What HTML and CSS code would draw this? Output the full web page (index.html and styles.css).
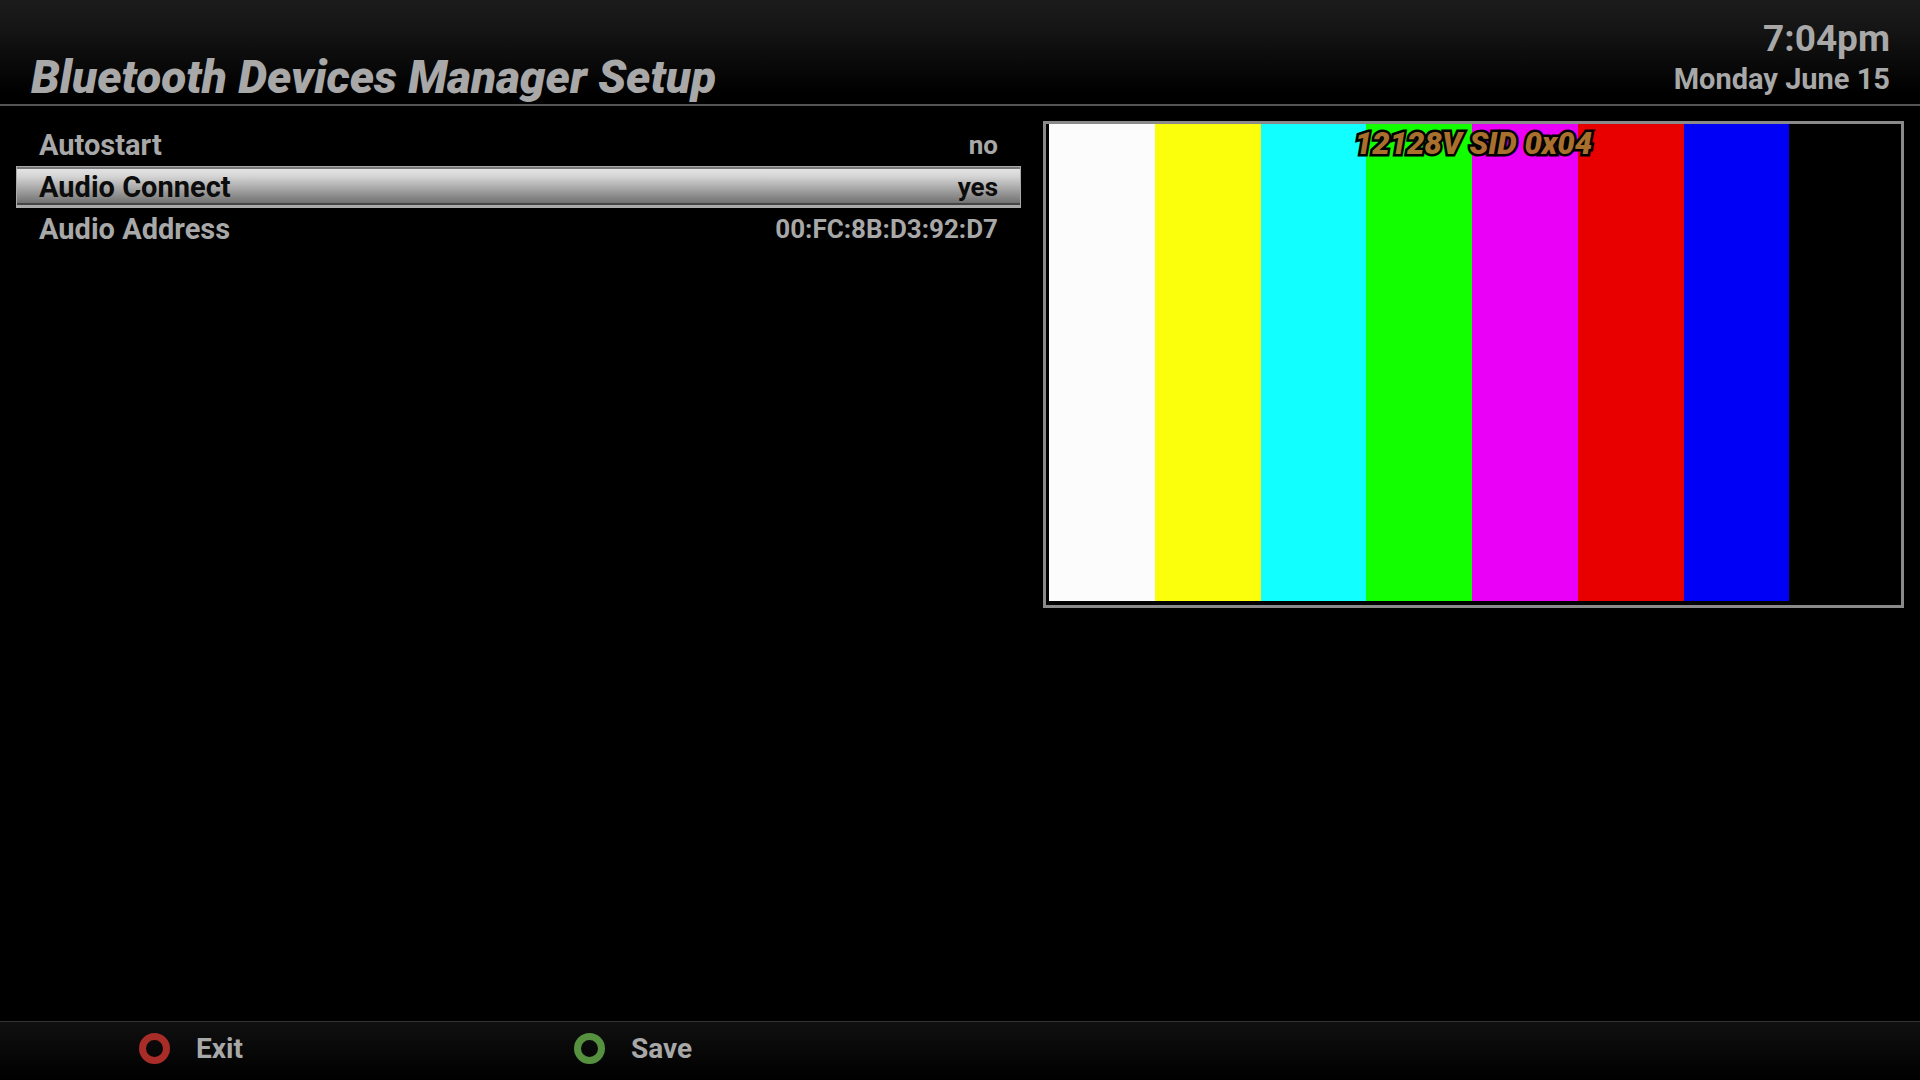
FILE: index.html
```html
<!DOCTYPE html>
<html lang="en">
<head>
  <meta charset="UTF-8">
  <meta name="viewport" content="width=device-width, initial-scale=1.0">
  <title>Bluetooth Devices Manager Setup</title>
  <link rel="stylesheet" href="styles.css">
</head>
<body>

  <header class="header">
    <h1 class="title">Bluetooth Devices Manager Setup</h1>
    <div class="clock">
      <div class="time">7:04pm</div>
      <div class="date">Monday June 15</div>
    </div>
  </header>

  <main class="content">
    <!-- Settings list -->
    <div class="settings">
      <button type="button" class="setting">
        <span class="label">Autostart</span>
        <span class="value">no</span>
      </button>
      <button type="button" class="setting selected">
        <span class="label">Audio Connect</span>
        <span class="value">yes</span>
      </button>
      <button type="button" class="setting">
        <span class="label">Audio Address</span>
        <span class="value">00:FC:8B:D3:92:D7</span>
      </button>
    </div>

    <!-- Live TV preview -->
    <section class="preview">
      <div class="bars">
        <div class="bar white"></div>
        <div class="bar yellow"></div>
        <div class="bar cyan"></div>
        <div class="bar green"></div>
        <div class="bar magenta"></div>
        <div class="bar red"></div>
        <div class="bar blue"></div>
        <div class="bar black"></div>
      </div>
      <div class="channel">12128V SID 0x04</div>
    </section>
  </main>

  <footer class="footer">
    <button type="button" class="key"><span class="ring ring-red"></span>Exit</button>
    <button type="button" class="key"><span class="ring ring-green"></span>Save</button>
  </footer>

</body>
</html>
```

FILE: styles.css
```css
* {
  box-sizing: border-box;
}

body {
  margin: 0;
  min-height: 100vh;
  display: flex;
  flex-direction: column;
  background: #000;
  color: #a8a8a8;
  font-family: Roboto, sans-serif;
  font-weight: 700;
}

button {
  margin: 0;
  border: 0;
  background: none;
  color: inherit;
  font: inherit;
}

/* Header */
.header {
  display: flex;
  justify-content: space-between;
  align-items: flex-end;
  height: 106px;
  padding: 0 30px 0 31px;
  background: linear-gradient(#1c1c1c, #141414 30%, #000 90%);
  border-bottom: 2px solid #555;
}

.title {
  margin: 0;
  font-size: 46px;
  line-height: 54px;
  font-weight: 900;
  font-style: italic;
}

.clock {
  text-align: right;
}

.time {
  font-size: 37px;
  line-height: 44px;
}

.date {
  font-size: 29px;
  line-height: 36px;
  padding-bottom: 7px;
}

/* Main area */
.content {
  flex: 1;
  display: grid;
  grid-template-columns: 1005fr 861fr;
  align-items: start;
  gap: 22px;
  padding: 15px 16px 0;
}

.settings {
  padding-top: 3px;
}

.setting {
  display: flex;
  justify-content: space-between;
  align-items: center;
  width: 100%;
  height: 42px;
  padding: 0 23px;
  font-size: 29px;
}

.value {
  font-size: 26px;
}

.selected {
  color: #0c0c0c;
  background: linear-gradient(#e8e8e8, #d4d4d4 25%, #6a6a6a) padding-box;
  border: 1px solid #aaa;
  border-bottom-width: 3px;
  box-shadow: inset 0 2px #777, inset 0 -2px #444;
  padding: 2px 22px 0;
}

/* Preview */
.preview {
  position: relative;
  aspect-ratio: 861 / 487;
  padding: 0 6px 4px 3px;
  border: 3px solid #8a8a8a;
}

.bars {
  display: grid;
  grid-template-columns: repeat(8, 1fr);
  height: 100%;
}

.white { background: #fcfcfc; }
.yellow { background: #fcff0c; }
.cyan { background: #12ffff; }
.green { background: #12ff00; }
.magenta { background: #ea00f6; }
.red { background: #e80000; }
.blue { background: #0000f6; }
.black { background: #000; }

.channel {
  position: absolute;
  top: 0;
  left: 0;
  right: 0;
  text-align: center;
  font-size: 31px;
  line-height: 40px;
  font-weight: 900;
  font-style: italic;
  color: #a8702c;
  -webkit-text-stroke: 5px #000;
  paint-order: stroke fill;
}

/* Colour keys */
.footer {
  display: flex;
  height: 59px;
  padding-left: 139px;
  background: linear-gradient(#101010, #000);
  border-top: 1px solid #333;
}

.key {
  display: flex;
  align-items: center;
  gap: 26px;
  width: 435px;
  padding: 0 0 5px;
  font-size: 28px;
}

.ring {
  width: 31px;
  height: 31px;
  border-radius: 50%;
  border: 7px solid;
}

.ring-red { border-color: #a82c28; }
.ring-green { border-color: #55913f; }
```
